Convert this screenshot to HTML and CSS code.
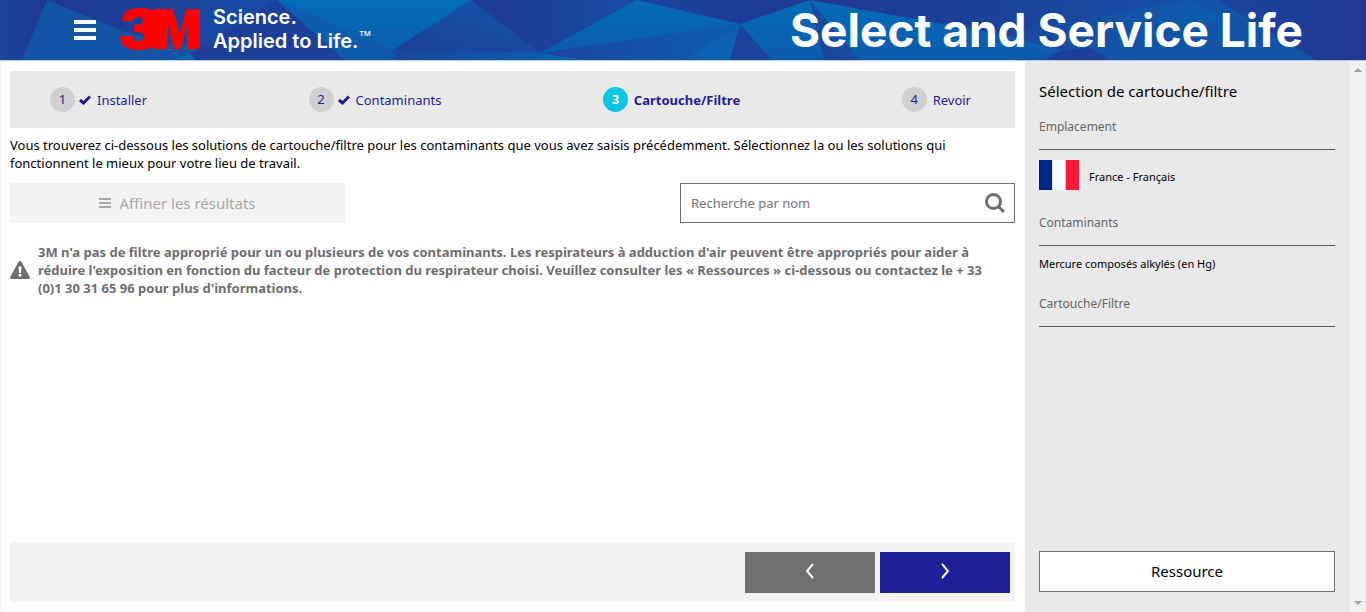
FILE: index.html
```
<!DOCTYPE html>
<html lang="fr">
<head>
<meta charset="utf-8">
<title>Select and Service Life</title>
<link rel="stylesheet" href="styles.css">
</head>
<body>
<header class="banner">
  <svg class="banner-art" viewBox="0 0 1366 60" preserveAspectRatio="none" aria-hidden="true">
    <defs>
      <linearGradient id="bright" x1="0" y1="0" x2="0" y2="1"><stop offset="0" stop-color="#036cb7"/><stop offset="1" stop-color="#0d5cae"/></linearGradient>
      <linearGradient id="mid" x1="0" y1="1" x2="1" y2="0"><stop offset="0" stop-color="#1d3f97"/><stop offset="1" stop-color="#1157a8"/></linearGradient>
      <linearGradient id="deep" x1="0" y1="0" x2="1" y2="0"><stop offset="0" stop-color="#203793"/><stop offset="1" stop-color="#164ea3"/></linearGradient>
      <linearGradient id="fade" x1="0" y1="0" x2="1" y2="0"><stop offset="0" stop-color="#1a459d"/><stop offset="1" stop-color="#213793"/></linearGradient>
      <linearGradient id="haze" x1="0" y1="0" x2="1" y2="0"><stop offset="0" stop-color="#1b459c"/><stop offset="1" stop-color="#0d5dad"/></linearGradient>
    </defs>
    <path fill="#1254a6" d="M0 0H1366V60H0z"/>
    <path fill="url(#fade)" d="M0 0H47L22 60H0z"/>
    <path fill="url(#deep)" d="M47 0H277L240 25 205 50 125 32z"/>
    <path fill="#0b66b2" d="M170 60L190 54 196 60z"/>
    <path fill="#1d3f99" d="M277 0L345 60H196L190 54z"/>
    <path fill="url(#bright)" d="M277 0H471L393 50 396 60H345z"/>
    <path fill="#1158a8" d="M277 0L345 60H396L393 50z" opacity=".6"/>
    <path fill="url(#mid)" d="M471 0L393 50 540 53z"/>
    <path fill="url(#haze)" d="M393 50L540 53 537 60H396z"/>
    <path fill="url(#deep)" d="M471 0H637L540 53z"/>
    <path fill="url(#bright)" d="M637 0L740 24 540 53z"/>
    <path fill="url(#haze)" d="M540 53L740 24 685 60H585z"/>
    <path fill="#0c62b1" d="M540 53L585 60H537zM740 24L685 60H730z"/>
    <path fill="url(#fade)" d="M637 0H810L740 24z"/>
    <path fill="#1c439c" d="M740 24L730 60H772z"/>
    <path fill="url(#bright)" d="M740 24L810 0 824 60H772z"/>
    <path fill="url(#mid)" d="M810 0L860 60H824z"/>
    <path fill="url(#bright)" d="M810 0L1010 36 1062 50 1020 60H860z"/>
    <path fill="url(#deep)" d="M810 0H1190L1010 36z"/>
    <path fill="url(#haze)" d="M1000 34L1190 0 1225 20 1062 50z"/>
    <path fill="#1c3f9a" d="M1062 50L1045 60H1110L1090 48z"/>
    <path fill="url(#fade)" d="M1218 0H1366V60H1316z"/>
  </svg>
  <div class="brand">
    <button class="menu" type="button" aria-label="Menu"><span></span><span></span><span></span></button>
    <svg class="logo" viewBox="0 0 80 42" role="img" aria-label="3M">
      <path fill="#f00" d="M2 13C3 4 9 0 19 0 26 0 31 1 34 4V1H53L60 26 66 1H80V41H67V17L61 41H54L48 17V41H34V38C30 41 25 42 18 42 7 42 0 37 0 28H13C13 31 15 33 18 33 22 33 24 31 24 28 24 25 21 24 14 24V17C20 17 23 16 23 13 23 10 21 9 18 9 15 9 14 10 14 13z"/>
    </svg>
    <p class="slogan">Science.<br>Applied to Life.<sup>™</sup></p>
  </div>
  <h1 class="title">Select and Service Life</h1>
</header>

<div class="page">
  <main class="content">
    <ol class="steps">
      <li class="step"><span class="num">1</span><svg class="check" viewBox="0 0 12 10"><path d="M1 5L4.500 8 11 1.500"/></svg><a href="#installer">Installer</a></li>
      <li class="step"><span class="num">2</span><svg class="check" viewBox="0 0 12 10"><path d="M1 5L4.500 8 11 1.500"/></svg><a href="#contaminants">Contaminants</a></li>
      <li class="step current" aria-current="step"><span class="num">3</span><a href="#cartouche">Cartouche/Filtre</a></li>
      <li class="step"><span class="num">4</span><a href="#revoir">Revoir</a></li>
    </ol>
    <p class="intro">Vous trouverez ci-dessous les solutions de cartouche/filtre pour les contaminants que vous avez saisis précédemment. Sélectionnez la ou les solutions qui fonctionnent le mieux pour votre lieu de travail.</p>
    <div class="tools">
      <button class="refine" type="button" disabled>
        <svg viewBox="0 0 12 10" width="12" height="10"><path fill="currentColor" d="M0 0H12V2H0zM0 4H12V6H0zM0 8H12V10H0z"/></svg>
        Affiner les résultats
      </button>
      <form class="search">
        <input type="text" placeholder="Recherche par nom" aria-label="Recherche par nom">
        <button type="button" aria-label="Rechercher"><svg viewBox="0 0 20 20" width="20" height="20"><circle cx="8.500" cy="8.500" r="7"/><path d="M13.500 13.500L19 19"/></svg></button>
      </form>
    </div>
    <div class="notice">
      <svg viewBox="0 0 20 18" width="20" height="18"><path fill="#6e6e6e" d="M10 0Q11 0 11.500 1L19.800 16Q20.500 18 18.500 18H1.500Q-.5 18 .2 16L8.500 1Q9 0 10 0z"/><path fill="#fff" d="M8.500 5.500H11.500L11 12H9zM8.700 13H11.300V15.500H8.700z"/></svg>
      <p>3M n'a pas de filtre approprié pour un ou plusieurs de vos contaminants. Les respirateurs à adduction d'air peuvent être appropriés pour aider à réduire l'exposition en fonction du facteur de protection du respirateur choisi. Veuillez consulter les « Ressources » ci-dessous ou contactez le + 33 (0)1 30 31 65 96 pour plus d'informations.</p>
    </div>
    <nav class="pager">
      <button class="prev" type="button" aria-label="Précédent"><svg viewBox="0 0 10 18" width="10" height="18"><path d="M8 2L2 9 8 16"/></svg></button>
      <button class="next" type="button" aria-label="Suivant"><svg viewBox="0 0 10 18" width="10" height="18"><path d="M2 2L8 9 2 16"/></svg></button>
    </nav>
  </main>
  <aside class="summary">
    <h2>Sélection de cartouche/filtre</h2>
    <h3>Emplacement</h3>
    <p class="place"><svg viewBox="0 0 40 30" width="40" height="30"><path fill="#002488" d="M0 0H13.300V30H0z"/><path fill="#fff" d="M13.300 0H26.700V30H13.300z"/><path fill="#f71d38" d="M26.700 0H40V30H26.700z"/></svg><span>France - Français</span></p>
    <h3>Contaminants</h3>
    <p class="item">Mercure composés alkylés (en Hg)</p>
    <h3>Cartouche/Filtre</h3>
    <button class="resource" type="button">Ressource</button>
  </aside>
  <div class="scroll" aria-hidden="true">
    <svg viewBox="0 0 8 4" width="8" height="4"><path d="M0 4L4 0 8 4z"/></svg>
    <svg viewBox="0 0 8 4" width="8" height="4"><path d="M0 0L4 4 8 0z"/></svg>
  </div>
</div>
</body>
</html>
```
FILE: styles.css
```
* { box-sizing: border-box; }
body {
  margin: 0;
  min-height: 100vh;
  display: flex;
  flex-direction: column;
  font: 13px/18px "Noto Sans", "Open Sans", sans-serif;
  color: #000;
  background: #fff;
}
h1, h2, h3, p, ol { margin: 0; padding: 0; font-weight: 400; }
button { font: inherit; border: 0; padding: 0; cursor: pointer; }
svg { flex: none; }

.banner {
  position: relative;
  height: 61px;
  flex: none;
  display: flex;
  justify-content: space-between;
  align-items: center;
  padding: 0 63px 0 74px;
  border-bottom: 1px solid #b4cae2;
  color: #fff;
}
.banner-art { position: absolute; inset: 0; width: 100%; height: 100%; }
.brand { position: relative; display: flex; align-items: center; }
.menu {
  width: 22px;
  display: flex;
  flex-direction: column;
  gap: 4px;
  background: none;
}
.menu span { height: 4px; background: #fff; }
.logo { width: 80px; height: 42px; margin: 0 13px 3px 24px; }
.slogan { margin-bottom: 2px; font: 600 20px/24px Inter, sans-serif; }
.slogan sup { font: 400 13px/0 "Liberation Sans", sans-serif; }
.title { position: relative; font: 700 46px/60px Inter, sans-serif; white-space: nowrap; }

.page { flex: 1; display: flex; }
.content {
  flex: 1;
  min-width: 0;
  display: flex;
  flex-direction: column;
  padding: 10px;
  border-left: 1px solid #f1f1f1;
  padding-left: 9px;
}
.steps {
  list-style: none;
  display: flex;
  justify-content: space-between;
  align-items: center;
  height: 57px;
  padding: 0 44px 0 40px;
  background: #e9e9e9;
}
.step { display: flex; align-items: center; color: #1e1e96; }
.step a { color: inherit; text-decoration: none; }
.num {
  width: 25px;
  height: 25px;
  margin-right: 6px;
  border-radius: 50%;
  background: #d0d0d0;
  line-height: 25px;
  text-align: center;
}
.check { width: 12px; height: 10px; margin: 0 6px 0 -2px; fill: none; stroke: #1e1e96; stroke-width: 3; }
.current { font-weight: 700; }
.current .num { background: #08c6e4; color: #fff; }
.intro { margin-top: 8px; }
.tools { display: flex; justify-content: space-between; margin-top: 11px; height: 40px; }
.refine {
  width: 33.333%;
  display: flex;
  align-items: center;
  justify-content: center;
  gap: 8px;
  background: #f3f3f3;
  color: #a8a8a8;
  font-size: 15px;
}
.search { width: 33.333%; display: flex; align-items: center; border: 1px solid #6e6e6e; padding: 0 9px 0 10px; }
.search input { flex: 1; min-width: 0; border: 0; padding: 0; font: inherit; outline: 0; background: none; }
.search input::placeholder { color: #757575; opacity: 1; }
.search button { background: none; display: flex; }
.search svg { fill: none; stroke: #6e6e6e; stroke-width: 3; }
.notice { display: flex; align-items: center; gap: 8px; margin-top: 20px; padding-right: 10px; color: #6e6e6e; }
.notice p { font-weight: 700; }
.pager { display: flex; justify-content: flex-end; gap: 5px; margin-top: auto; padding: 10px 5px 9px; background: #f3f3f3; }
.pager button { width: 130px; height: 41px; padding-bottom: 4px; display: flex; align-items: center; justify-content: center; }
.pager svg { fill: none; stroke: #fff; stroke-width: 2; }
.prev { background: #707070; }
.next { background: #1e1e96; }

.summary { width: 324px; flex: none; display: flex; flex-direction: column; padding: 19px 14px 20px; background: #e9e9e9; }
.summary h2 { font-size: 15px; line-height: 22px; }
.summary h3 { padding: 16px 0 13px; border-bottom: 1px solid #58585b; color: #666; font-size: 12px; line-height: 18px; }
.place { display: flex; align-items: center; gap: 10px; padding: 10px 0 8px; font-size: 11px; }
.place span { padding-top: 3px; }
.item { padding: 9px 0 6px; font-size: 11px; }
.resource { margin-top: auto; height: 41px; padding-bottom: 2px; border: 1px solid #6e6e6e; background: #fff; font-size: 15px; }
.scroll { width: 17px; flex: none; display: flex; flex-direction: column; justify-content: space-between; align-items: center; padding: 7px 0; background: #f1f1f1; fill: #a3a3a3; }
```
